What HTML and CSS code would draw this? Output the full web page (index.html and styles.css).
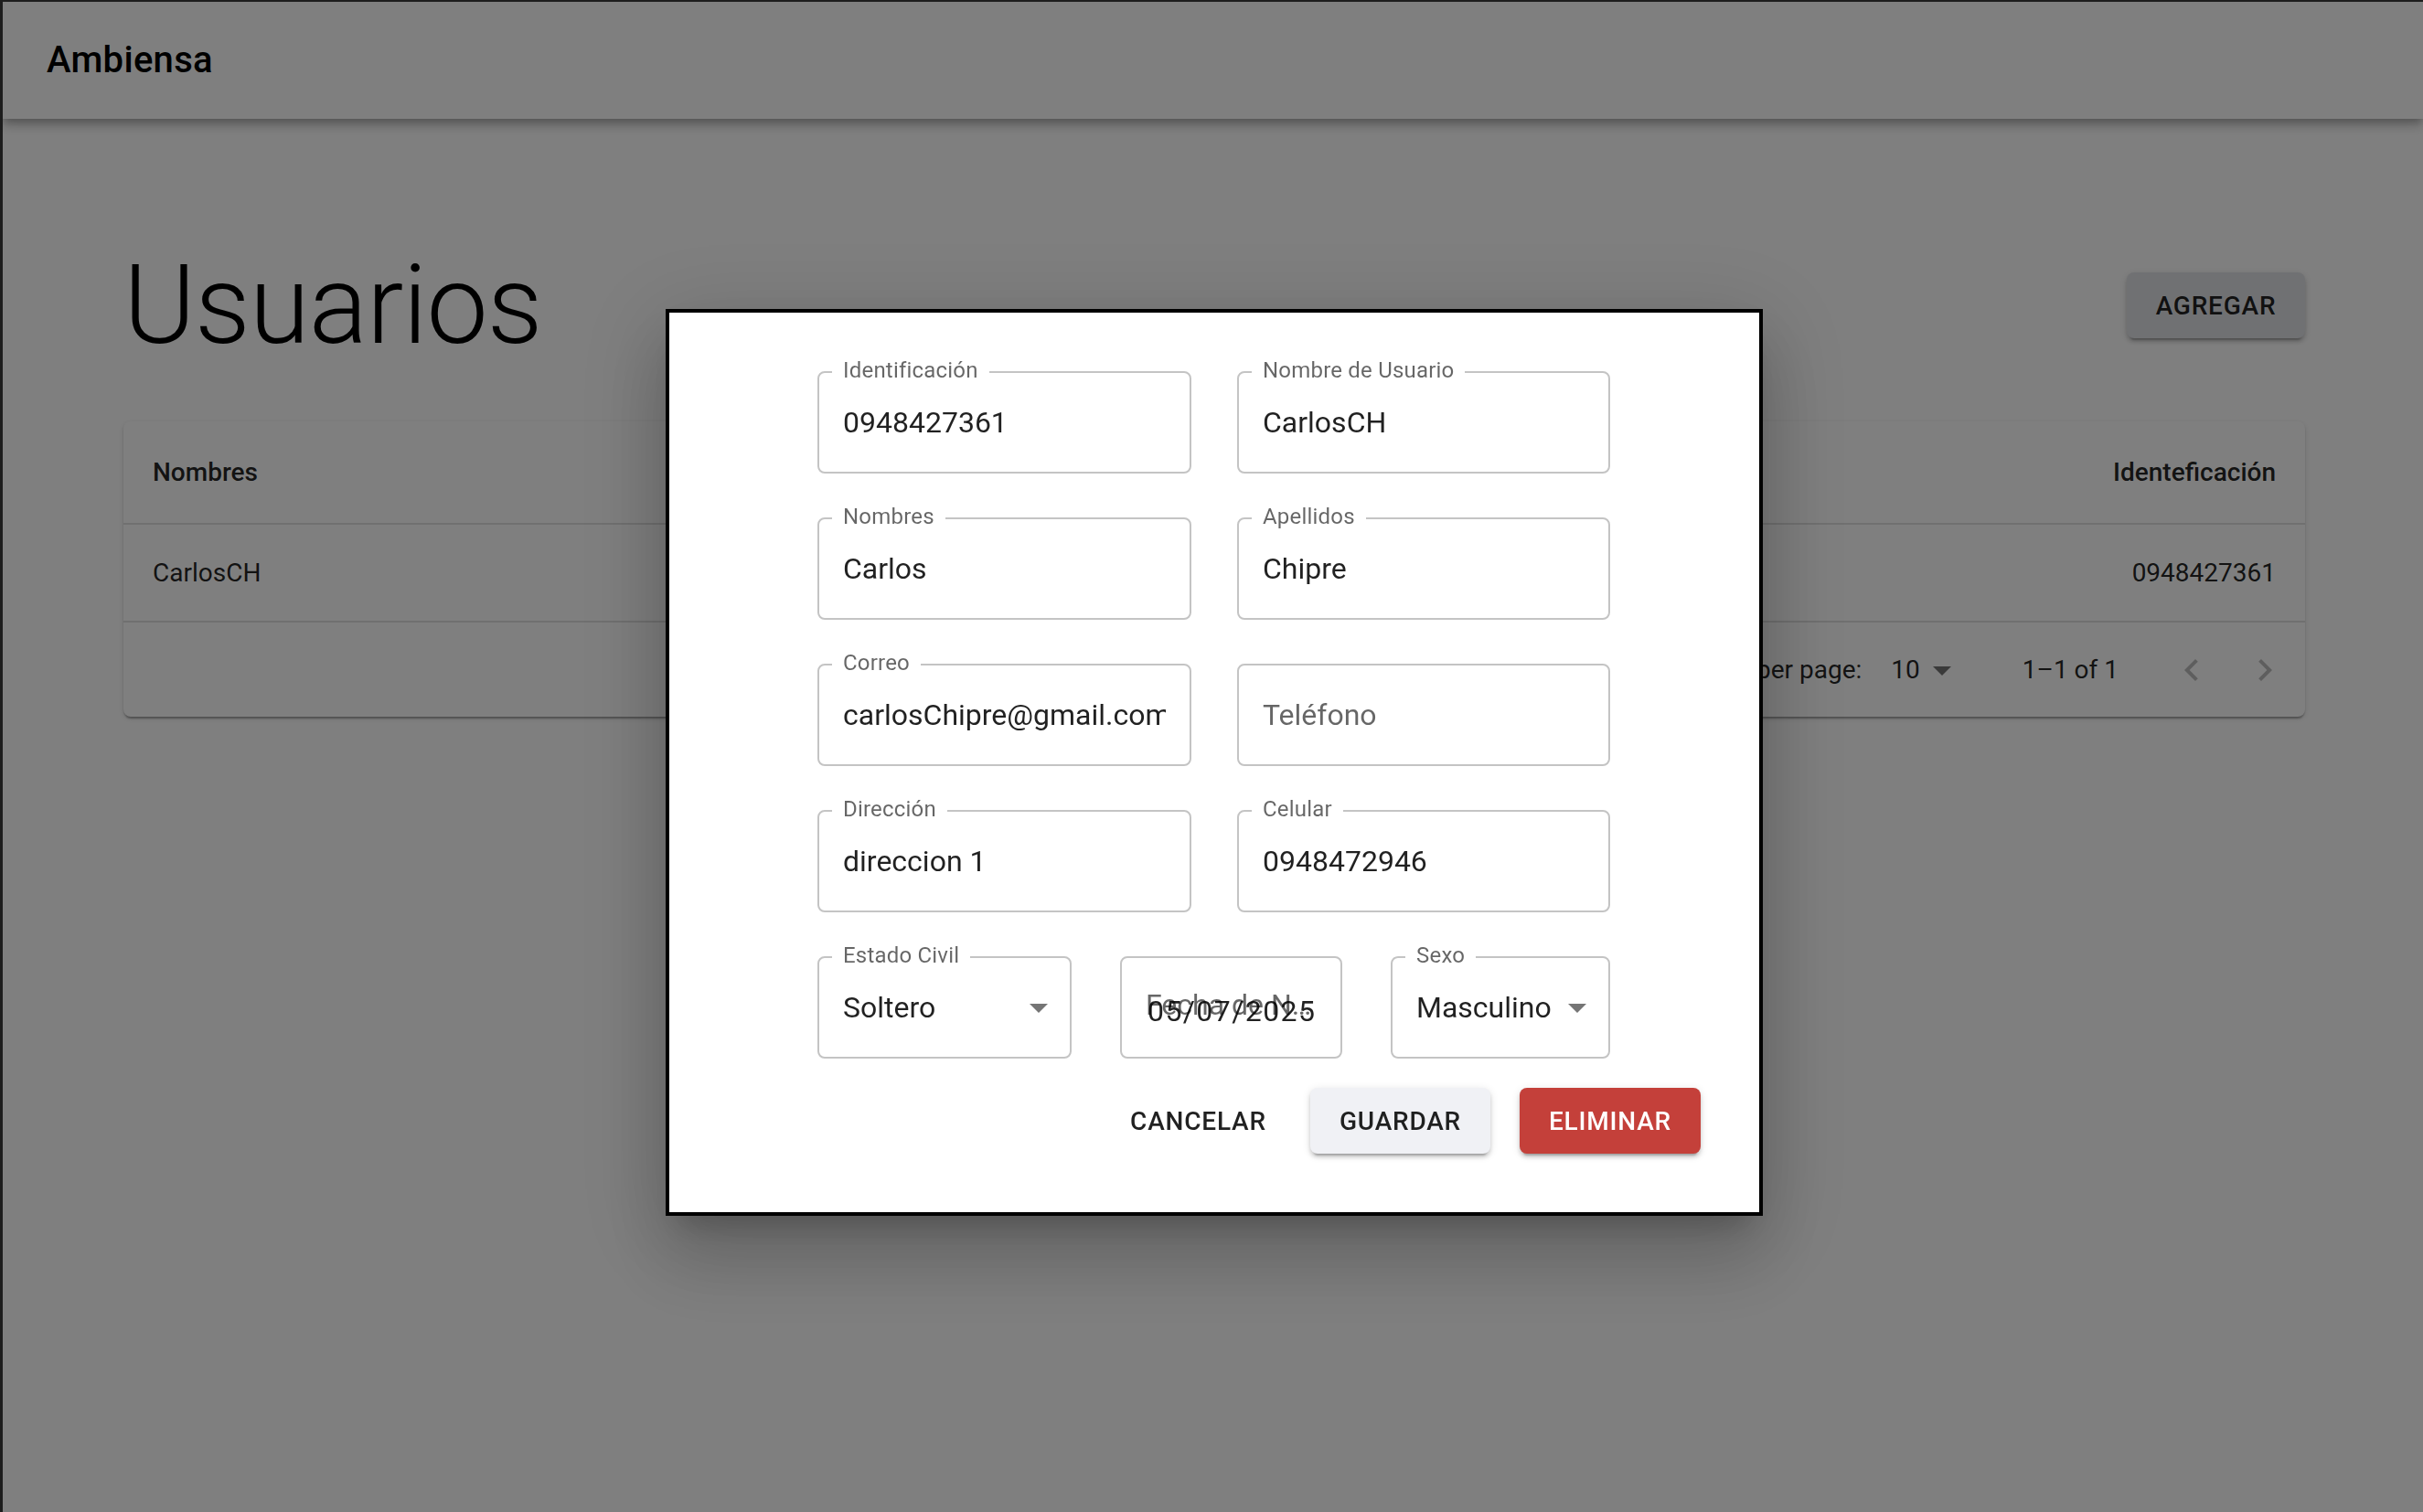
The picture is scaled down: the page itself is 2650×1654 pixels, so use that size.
FILE: index.html
```html
<!DOCTYPE html>
<html lang="es">
<head>
<meta charset="utf-8">
<title>Ambiensa - Usuarios</title>
<link rel="stylesheet" href="styles.css">
</head>
<body>
<header class="appbar">
  <div class="toolbar"><h6 class="brand">Ambiensa</h6></div>
</header>
<main class="container">
  <div class="title-row">
    <h2 class="title">Usuarios</h2>
    <button class="btn btn-grey">AGREGAR</button>
  </div>
  <div class="paper">
    <table class="table">
      <thead>
        <tr><th class="cell head left">Nombres</th><th class="cell head right">Identeficación</th></tr>
      </thead>
      <tbody>
        <tr><td class="cell body left">CarlosCH</td><td class="cell body right">0948427361</td></tr>
      </tbody>
    </table>
    <div class="pagination">
      <span class="caption">Rows per page:</span>
      <div class="pg-select"><span>10</span><svg class="drop" viewBox="0 0 24 24"><path d="M7 10l5 5 5-5z"/></svg></div>
      <span class="caption">1–1 of 1</span>
      <div class="pg-actions">
        <span class="icon-btn"><svg viewBox="0 0 24 24"><path d="M15.41 16.59L10.83 12l4.58-4.59L14 6l-6 6 6 6 1.41-1.41z"/></svg></span>
        <span class="icon-btn"><svg viewBox="0 0 24 24"><path d="M8.59 16.59L13.17 12 8.59 7.41 10 6l6 6-6 6-1.41-1.41z"/></svg></span>
      </div>
    </div>
  </div>
</main>
<div class="backdrop"></div>
<div class="modal-root">
  <div class="modal">
    <div class="form">
      <div class="grid2">
        <div class="field"><span class="label">Identificación</span><div class="value">0948427361</div></div>
        <div class="field"><span class="label">Nombre de Usuario</span><div class="value">CarlosCH</div></div>
        <div class="field"><span class="label">Nombres</span><div class="value">Carlos</div></div>
        <div class="field"><span class="label">Apellidos</span><div class="value">Chipre</div></div>
        <div class="field"><span class="label">Correo</span><div class="value">carlosChipre@gmail.com</div></div>
        <div class="field"><div class="value placeholder">Teléfono</div></div>
        <div class="field"><span class="label">Dirección</span><div class="value">direccion 1</div></div>
        <div class="field"><span class="label">Celular</span><div class="value">0948472946</div></div>
      </div>
      <div class="grid3">
        <div class="field"><span class="label">Estado Civil</span><div class="value select">Soltero</div><svg class="drop sel-icon" viewBox="0 0 24 24"><path d="M7 10l5 5 5-5z"/></svg></div>
        <div class="field date"><div class="value date-label">Fecha de Nacimiento</div><div class="date-value">05/07/2025</div></div>
        <div class="field"><span class="label">Sexo</span><div class="value select">Masculino</div><svg class="drop sel-icon" viewBox="0 0 24 24"><path d="M7 10l5 5 5-5z"/></svg></div>
      </div>
    </div>
    <div class="actions">
      <button class="btn btn-text">CANCELAR</button>
      <button class="btn btn-light">GUARDAR</button>
      <button class="btn btn-red">ELIMINAR</button>
    </div>
  </div>
</div>
</body>
</html>
```
FILE: styles.css
```css
* { box-sizing: border-box; }
html, body { margin: 0; padding: 0; }
body {
  font-family: Roboto, "Liberation Sans", Arial, sans-serif;
  background: #fff;
  color: rgba(0,0,0,0.87);
  min-height: 100vh;
  border-top: 2px solid #3a3a3a;
  border-left: 3px solid #3a3a3a;
}
.appbar {
  height: 128px;
  background: #fff;
  box-shadow: 0px 4px 8px -2px rgba(0,0,0,0.2), 0px 8px 10px 0px rgba(0,0,0,0.14), 0px 2px 20px 0px rgba(0,0,0,0.12);
  position: relative;
  z-index: 1;
}
.toolbar { height: 128px; display: flex; align-items: center; padding: 0 48px; }
.brand { margin: 0; font-size: 40px; font-weight: 500; line-height: 1.6; letter-spacing: 0.3px; color: #000; }
.container { width: 2386px; margin-left: 132px; padding-top: 132px; }
.title-row { display: flex; align-items: center; justify-content: space-between; height: 144px; }
.title { margin: 0; font-size: 120px; font-weight: 300; line-height: 1.2; letter-spacing: -1px; color: #000; }
.btn {
  font-family: Roboto, "Liberation Sans", Arial, sans-serif;
  font-size: 28px; font-weight: 500; letter-spacing: 0.8px;
  height: 72px; padding: 0 32px; border: 0; border-radius: 8px;
  display: inline-flex; align-items: center; justify-content: center;
  color: rgba(0,0,0,0.87); background: transparent; cursor: pointer;
}
.btn-grey, .btn-light, .btn-red {
  box-shadow: 0px 6px 2px -4px rgba(0,0,0,0.2), 0px 4px 4px 0px rgba(0,0,0,0.14), 0px 2px 10px 0px rgba(0,0,0,0.12);
}
.btn-grey { background: #e0e2e6; width: 195px; }
.btn-light { background: #f0f1f5; width: 197px; }
.btn-red { background: #c4403a; color: #fff; width: 198px; }
.btn-text { padding: 0 16px; width: 179px; }
.paper {
  margin-top: 55px; background: #fff; border-radius: 8px;
  box-shadow: 0px 4px 2px -2px rgba(0,0,0,0.2), 0px 2px 2px 0px rgba(0,0,0,0.14), 0px 2px 6px 0px rgba(0,0,0,0.12);
  overflow: hidden;
}
.table { width: 100%; border-collapse: collapse; }
.cell { padding: 0 32px; border-bottom: 2px solid #e0e0e0; font-size: 28px; color: rgba(0,0,0,0.87); }
.head { height: 112px; font-weight: 500; }
.body { height: 107px; font-weight: 400; }
.left { text-align: left; }
.right { text-align: right; }
.pagination { height: 103px; display: flex; align-items: center; justify-content: flex-end; padding-right: 4px; font-size: 28px; color: rgba(0,0,0,0.87); }
.pg-select { display: flex; align-items: center; margin: 0 64px 0 16px; padding-left: 16px; }
.drop { width: 48px; height: 48px; fill: rgba(0,0,0,0.54); }
.pg-actions { display: flex; margin-left: 40px; }
.icon-btn { width: 80px; height: 80px; display: flex; align-items: center; justify-content: center; }
.icon-btn svg { width: 48px; height: 48px; fill: rgba(0,0,0,0.26); }
.backdrop { position: fixed; inset: 0; background: rgba(0,0,0,0.5); z-index: 5; }
.modal-root { position: fixed; inset: 0; z-index: 6; display: flex; align-items: center; justify-content: center; padding: 14px 0 0 6px; }
.modal {
  width: 1200px; background: #fff; border: 4px solid #000; padding: 64px;
  box-shadow: 0px 22px 30px -14px rgba(0,0,0,0.2), 0px 48px 76px 6px rgba(0,0,0,0.14), 0px 18px 92px 16px rgba(0,0,0,0.12);
}
.form { width: 867px; margin-left: 98px; display: flex; flex-direction: column; row-gap: 48px; }
.grid2 { display: grid; grid-template-columns: 409px 408px; column-gap: 50px; row-gap: 48px; }
.grid3 { display: grid; grid-template-columns: 278px 243px 240px; column-gap: 53px; }
.field { position: relative; height: 112px; border: 2px solid #c4c4c4; border-radius: 8px; display: flex; align-items: center; }
.label {
  position: absolute; left: 14px; top: -15px; padding: 0 12px; background: #fff;
  font-size: 24px; line-height: 24px; letter-spacing: 0.2px; color: rgba(0,0,0,0.6); white-space: nowrap;
}
.value { margin: 0 26px; font-size: 32px; line-height: 46px; white-space: nowrap; overflow: hidden; color: rgba(0,0,0,0.87); flex: 1; }
.placeholder { color: rgba(0,0,0,0.6); }
.select { margin-right: 0; }
.sel-icon { flex: none; margin-right: 10px; }
.date { overflow: hidden; }
.date-label { color: rgba(0,0,0,0.6); text-overflow: ellipsis; max-width: 195px; margin-top: -6px; }
.date-value { position: absolute; left: 28px; top: 35px; font-size: 32px; line-height: 46px; letter-spacing: 1.4px; color: rgba(0,0,0,0.87); white-space: nowrap; }
.actions { display: flex; justify-content: flex-end; gap: 32px; margin-top: 32px; }
.actions .btn-light { margin-left: 1px; }
```
